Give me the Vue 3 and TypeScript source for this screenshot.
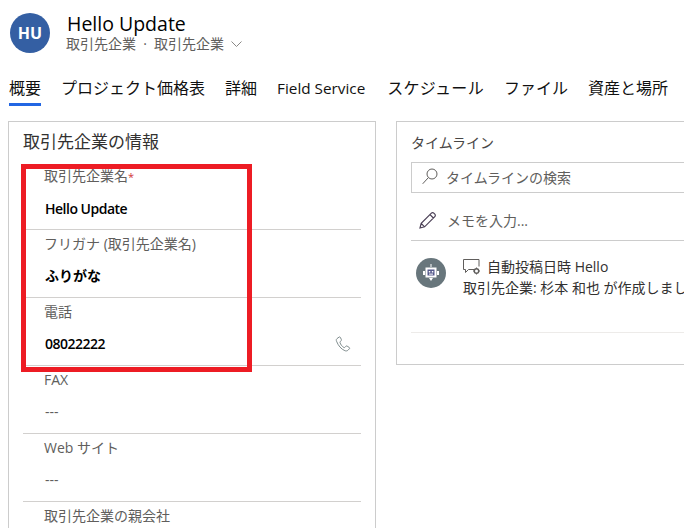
<script setup lang="ts">
const tabs = ['概要', 'プロジェクト価格表', '詳細', 'Field Service', 'スケジュール', 'ファイル', '資産と場所']
const rows = [
  { label: '取引先企業名', req: true, value: 'Hello Update', strong: true, tight: true },
  { label: 'フリガナ (取引先企業名)', value: 'ふりがな', strong: true },
  { label: '電話', value: '08022222', strong: true, phone: true, tight: true },
  { label: 'FAX', value: '---' },
  { label: 'Web サイト', value: '---' },
  { label: '取引先企業の親会社', value: '---' },
]
</script>

<template>
  <div class="page">
    <header class="head">
      <div class="avatar">HU</div>
      <div class="titles">
        <div class="title">Hello Update</div>
        <div class="sub">
          <span>取引先企業</span><span class="dot">·</span><span>取引先企業</span>
          <svg class="chev" width="11" height="6" viewBox="0 0 11 6"><path d="M.5.5l5 5 5-5" fill="none" stroke="#8a8886" /></svg>
        </div>
      </div>
    </header>
    <nav class="tabs">
      <div v-for="(t, i) in tabs" :key="t" class="tab" :class="{ on: i === 0, latin: t === 'Field Service', wide: t === 'スケジュール' }">{{ t }}</div>
    </nav>
    <main class="cols">
      <section class="card left">
        <h2 class="card-title">取引先企業の情報</h2>
        <div v-for="r in rows" :key="r.label" class="row">
          <div class="label">{{ r.label }}<span v-if="r.req" class="req">*</span></div>
          <div class="value" :class="{ strong: r.strong, tight: r.tight }">{{ r.value }}</div>
          <svg v-if="r.phone" class="phone" width="16" height="16" viewBox="0 0 16 16">
            <path d="M4.2 1 2 2.6c-.8.7-.9 1.500-.5 2.600 1.800 4.600 4.700 7.900 8.400 9.500 1.100.4 2.200.3 3-.4l1.600-1.600c.3-.4.200-.9-.2-1.200l-2.200-1.400c-.5-.3-1-.2-1.300.2l-.8 1c-.3.3-.7.4-1.100.2C6.900 10.300 5.600 8.500 5 6.500c-.1-.4 0-.8.300-1l.8-.7c.4-.3.5-.8.300-1.200L5.300 1.300C5 .9 4.600.8 4.200 1Z" fill="none" stroke="#7f8c8d" />
          </svg>
        </div>
      </section>
      <section class="card right">
        <h2 class="tl-title">タイムライン</h2>
        <div class="search">
          <svg width="16" height="17" viewBox="0 0 16 17"><circle cx="10" cy="6" r="5" fill="none" stroke="#605e5c" /><path d="M6.300 9.700.7 15.800" stroke="#605e5c" fill="none" /></svg>
          <span>タイムラインの検索</span>
        </div>
        <div class="memo">
          <svg width="17" height="17" viewBox="0 0 17 17"><path d="M1 16l1.200-4.600L12.400 1.200c.7-.7 1.700-.7 2.400 0l1 1c.7.7.7 1.700 0 2.400L5.600 14.800 1 16ZM2.200 11.400l3.400 3.400M11 2.600l3.400 3.400" fill="none" stroke="#4a3f55" stroke-width="1.200" /></svg>
          <span>メモを入力...</span>
        </div>
        <div class="post">
          <div class="bot">
            <svg width="18" height="20" viewBox="0 0 18 20">
              <path d="M9 1v3" stroke="#fff" />
              <rect x="3.500" y="4.500" width="11" height="10" fill="#fff" />
              <rect x="1" y="8" width="2" height="4" fill="#fff" /><rect x="15" y="8" width="2" height="4" fill="#fff" />
              <path d="M7 15h4l-2 3Z" fill="#fff" />
              <rect x="5.500" y="6.500" width="7" height="6" fill="#55598c" />
              <rect x="6.800" y="8" width="1.500" height="1.500" fill="#fff" /><rect x="9.800" y="8" width="1.500" height="1.500" fill="#fff" />
              <rect x="7" y="10.600" width="4" height="1" fill="#fff" />
            </svg>
          </div>
          <div class="post-body">
            <div class="post-head">
              <svg width="18" height="16" viewBox="0 0 18 16">
                <path d="M11 10.500H5.500L2.500 13.500v-3H.5V.5h15.500v7" fill="none" stroke="#605e5c" />
                <circle cx="13.500" cy="12" r="2.200" fill="none" stroke="#605e5c" stroke-width="1.400" />
                <path d="M13.500 8.500v1.400M13.500 14.200v1.300M10 12h1.400M15.700 12H17" stroke="#605e5c" />
              </svg>
              <span>自動投稿日時 Hello</span>
            </div>
            <div class="post-text">取引先企業: 杉本 和也 が作成しました</div>
          </div>
        </div>
        <div class="post-rule"></div>
      </section>
    </main>
    <div class="highlight"></div>
  </div>
</template>

<style>
html, body { margin: 0; background: #fff; }
</style>

<style scoped>
.page {
  position: relative;
  width: 684px;
  height: 528px;
  overflow: hidden;
  background: #fff;
  color: #323130;
  font-family: "Open Sans", "Noto Sans CJK JP", sans-serif;
}
.head { display: flex; gap: 16px; padding: 13px 0 0 10px; height: 53px; box-sizing: border-box; }
.avatar {
  width: 40px; height: 40px; border-radius: 50%;
  background: #345fa3; color: #fff;
  display: flex; align-items: center; justify-content: center;
  font-size: 16px; font-weight: 700;
}
.title { font-size: 19.500px; line-height: 22px; font-weight: 500; color: #000; padding-left: 1px; }
.sub { display: flex; align-items: center; font-size: 14px; line-height: 18px; color: #605e5c; }
.dot { margin: 0 6px; width: 6px; text-align: center; }
.chev { margin-left: 7px; }
.tabs { display: flex; gap: 20px; padding: 24px 0 0 9px; height: 68px; box-sizing: border-box; }
.tab { height: 29px; line-height: 22px; font-size: 16px; color: #111; white-space: nowrap; box-sizing: border-box; flex: none; }
.tab.latin { font-size: 15.300px; margin-right: 2px; }
.tab.wide { letter-spacing: 0.300px; }
.tab.on { border-bottom: 3px solid #2266e3; }
.cols { display: flex; gap: 20px; padding-left: 8px; align-items: flex-start; }
.card { border: 1px solid #ccc; box-sizing: border-box; flex: none; }
.left { width: 368px; padding: 0 14px; height: 500px; }
.card-title { margin: 0; font-size: 17px; font-weight: 400; line-height: 24px; padding-top: 8px; height: 40px; box-sizing: border-box; color: #323130; }
.row { position: relative; height: 68px; box-sizing: border-box; border-bottom: 1px solid #d2d0ce; padding-left: 21px; }
.label { font-size: 14px; line-height: 20px; padding-top: 4px; color: #605e5c; white-space: nowrap; }
.req { color: #d13438; font-size: 11px; }
.value { font-size: 14px; line-height: 20px; margin-top: 12px; padding-left: 1px; color: #605e5c; }
.value.strong { font-weight: 600; color: #000; }
.value.tight { letter-spacing: -0.500px; }
.phone { position: absolute; right: 10px; top: 38px; }
.right { width: 320px; height: 244px; padding-left: 14px; }
.tl-title { margin: 0; font-size: 14px; font-weight: 400; line-height: 20px; padding-top: 11px; height: 40px; box-sizing: border-box; color: #484644; }
.search {
  display: flex; align-items: center; gap: 8px;
  height: 31px; box-sizing: border-box;
  border: 1px solid #ccc; padding: 0 0 2px 10px;
  font-size: 14px; color: #605e5c;
}
.memo {
  display: flex; align-items: center; gap: 11px;
  height: 48px; box-sizing: border-box;
  border-bottom: 1px solid #ccc; padding: 7px 0 0 8px;
  font-size: 14px; color: #605e5c;
}
.post { display: flex; gap: 17px; padding: 16px 0 0 5px; height: 91px; box-sizing: border-box; }
.bot { width: 30px; height: 30px; border-radius: 50%; background: #68767c; display: flex; align-items: center; justify-content: center; flex: none; margin-top: 1px; }
.post-head { display: flex; align-items: center; gap: 6px; font-size: 14px; line-height: 20px; color: #323130; white-space: nowrap; }
.post-text { font-size: 14px; line-height: 20px; margin-top: 1px; color: #323130; white-space: nowrap; }
.post-rule { border-top: 1px solid #edebe9; }
.highlight {
  position: absolute; left: 21px; top: 164px;
  width: 231px; height: 208px;
  box-sizing: border-box; border: 5px solid #ed1c24;
  pointer-events: none;
}
</style>
